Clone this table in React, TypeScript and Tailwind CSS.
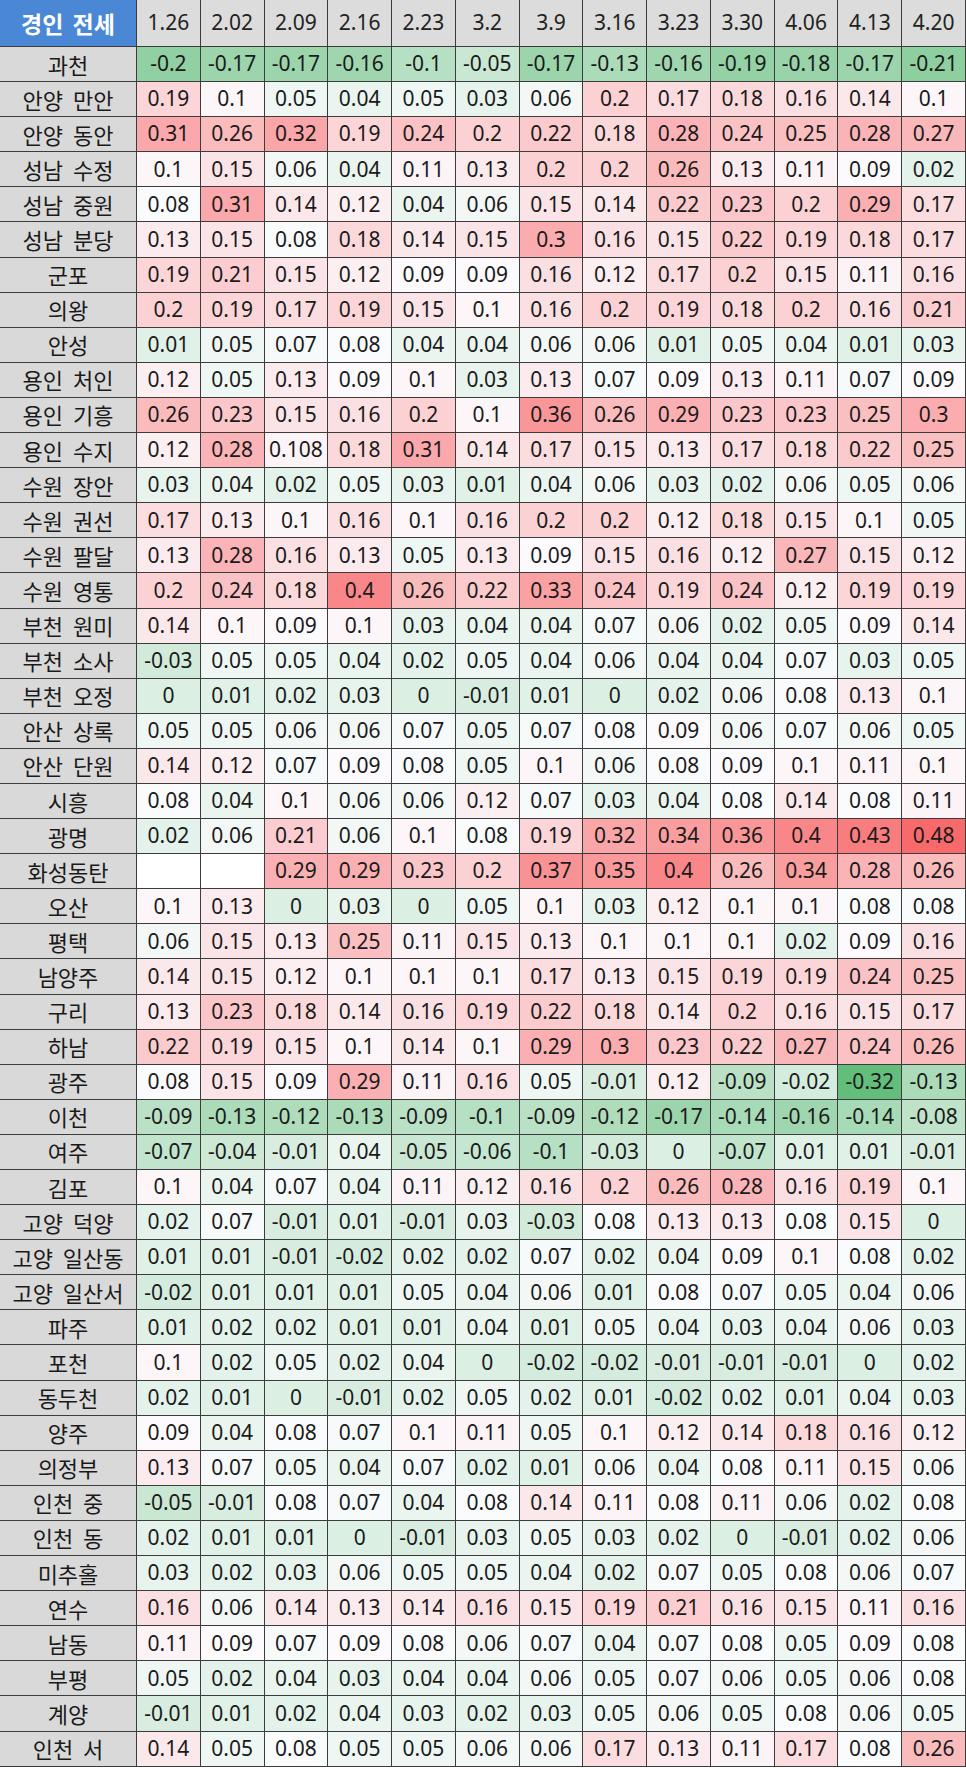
import React from 'react';

const cols = ['1.26', '2.02', '2.09', '2.16', '2.23', '3.2', '3.9', '3.16', '3.23', '3.30', '4.06', '4.13', '4.20'];

type Row = [string, (number | null)[]];

const rows: Row[] = [
  ['과천', [-0.2, -0.17, -0.17, -0.16, -0.1, -0.05, -0.17, -0.13, -0.16, -0.19, -0.18, -0.17, -0.21]],
  ['안양 만안', [0.19, 0.1, 0.05, 0.04, 0.05, 0.03, 0.06, 0.2, 0.17, 0.18, 0.16, 0.14, 0.1]],
  ['안양 동안', [0.31, 0.26, 0.32, 0.19, 0.24, 0.2, 0.22, 0.18, 0.28, 0.24, 0.25, 0.28, 0.27]],
  ['성남 수정', [0.1, 0.15, 0.06, 0.04, 0.11, 0.13, 0.2, 0.2, 0.26, 0.13, 0.11, 0.09, 0.02]],
  ['성남 중원', [0.08, 0.31, 0.14, 0.12, 0.04, 0.06, 0.15, 0.14, 0.22, 0.23, 0.2, 0.29, 0.17]],
  ['성남 분당', [0.13, 0.15, 0.08, 0.18, 0.14, 0.15, 0.3, 0.16, 0.15, 0.22, 0.19, 0.18, 0.17]],
  ['군포', [0.19, 0.21, 0.15, 0.12, 0.09, 0.09, 0.16, 0.12, 0.17, 0.2, 0.15, 0.11, 0.16]],
  ['의왕', [0.2, 0.19, 0.17, 0.19, 0.15, 0.1, 0.16, 0.2, 0.19, 0.18, 0.2, 0.16, 0.21]],
  ['안성', [0.01, 0.05, 0.07, 0.08, 0.04, 0.04, 0.06, 0.06, 0.01, 0.05, 0.04, 0.01, 0.03]],
  ['용인 처인', [0.12, 0.05, 0.13, 0.09, 0.1, 0.03, 0.13, 0.07, 0.09, 0.13, 0.11, 0.07, 0.09]],
  ['용인 기흥', [0.26, 0.23, 0.15, 0.16, 0.2, 0.1, 0.36, 0.26, 0.29, 0.23, 0.23, 0.25, 0.3]],
  ['용인 수지', [0.12, 0.28, 0.108, 0.18, 0.31, 0.14, 0.17, 0.15, 0.13, 0.17, 0.18, 0.22, 0.25]],
  ['수원 장안', [0.03, 0.04, 0.02, 0.05, 0.03, 0.01, 0.04, 0.06, 0.03, 0.02, 0.06, 0.05, 0.06]],
  ['수원 권선', [0.17, 0.13, 0.1, 0.16, 0.1, 0.16, 0.2, 0.2, 0.12, 0.18, 0.15, 0.1, 0.05]],
  ['수원 팔달', [0.13, 0.28, 0.16, 0.13, 0.05, 0.13, 0.09, 0.15, 0.16, 0.12, 0.27, 0.15, 0.12]],
  ['수원 영통', [0.2, 0.24, 0.18, 0.4, 0.26, 0.22, 0.33, 0.24, 0.19, 0.24, 0.12, 0.19, 0.19]],
  ['부천 원미', [0.14, 0.1, 0.09, 0.1, 0.03, 0.04, 0.04, 0.07, 0.06, 0.02, 0.05, 0.09, 0.14]],
  ['부천 소사', [-0.03, 0.05, 0.05, 0.04, 0.02, 0.05, 0.04, 0.06, 0.04, 0.04, 0.07, 0.03, 0.05]],
  ['부천 오정', [0, 0.01, 0.02, 0.03, 0, -0.01, 0.01, 0, 0.02, 0.06, 0.08, 0.13, 0.1]],
  ['안산 상록', [0.05, 0.05, 0.06, 0.06, 0.07, 0.05, 0.07, 0.08, 0.09, 0.06, 0.07, 0.06, 0.05]],
  ['안산 단원', [0.14, 0.12, 0.07, 0.09, 0.08, 0.05, 0.1, 0.06, 0.08, 0.09, 0.1, 0.11, 0.1]],
  ['시흥', [0.08, 0.04, 0.1, 0.06, 0.06, 0.12, 0.07, 0.03, 0.04, 0.08, 0.14, 0.08, 0.11]],
  ['광명', [0.02, 0.06, 0.21, 0.06, 0.1, 0.08, 0.19, 0.32, 0.34, 0.36, 0.4, 0.43, 0.48]],
  ['화성동탄', [null, null, 0.29, 0.29, 0.23, 0.2, 0.37, 0.35, 0.4, 0.26, 0.34, 0.28, 0.26]],
  ['오산', [0.1, 0.13, 0, 0.03, 0, 0.05, 0.1, 0.03, 0.12, 0.1, 0.1, 0.08, 0.08]],
  ['평택', [0.06, 0.15, 0.13, 0.25, 0.11, 0.15, 0.13, 0.1, 0.1, 0.1, 0.02, 0.09, 0.16]],
  ['남양주', [0.14, 0.15, 0.12, 0.1, 0.1, 0.1, 0.17, 0.13, 0.15, 0.19, 0.19, 0.24, 0.25]],
  ['구리', [0.13, 0.23, 0.18, 0.14, 0.16, 0.19, 0.22, 0.18, 0.14, 0.2, 0.16, 0.15, 0.17]],
  ['하남', [0.22, 0.19, 0.15, 0.1, 0.14, 0.1, 0.29, 0.3, 0.23, 0.22, 0.27, 0.24, 0.26]],
  ['광주', [0.08, 0.15, 0.09, 0.29, 0.11, 0.16, 0.05, -0.01, 0.12, -0.09, -0.02, -0.32, -0.13]],
  ['이천', [-0.09, -0.13, -0.12, -0.13, -0.09, -0.1, -0.09, -0.12, -0.17, -0.14, -0.16, -0.14, -0.08]],
  ['여주', [-0.07, -0.04, -0.01, 0.04, -0.05, -0.06, -0.1, -0.03, 0, -0.07, 0.01, 0.01, -0.01]],
  ['김포', [0.1, 0.04, 0.07, 0.04, 0.11, 0.12, 0.16, 0.2, 0.26, 0.28, 0.16, 0.19, 0.1]],
  ['고양 덕양', [0.02, 0.07, -0.01, 0.01, -0.01, 0.03, -0.03, 0.08, 0.13, 0.13, 0.08, 0.15, 0]],
  ['고양 일산동', [0.01, 0.01, -0.01, -0.02, 0.02, 0.02, 0.07, 0.02, 0.04, 0.09, 0.1, 0.08, 0.02]],
  ['고양 일산서', [-0.02, 0.01, 0.01, 0.01, 0.05, 0.04, 0.06, 0.01, 0.08, 0.07, 0.05, 0.04, 0.06]],
  ['파주', [0.01, 0.02, 0.02, 0.01, 0.01, 0.04, 0.01, 0.05, 0.04, 0.03, 0.04, 0.06, 0.03]],
  ['포천', [0.1, 0.02, 0.05, 0.02, 0.04, 0, -0.02, -0.02, -0.01, -0.01, -0.01, 0, 0.02]],
  ['동두천', [0.02, 0.01, 0, -0.01, 0.02, 0.05, 0.02, 0.01, -0.02, 0.02, 0.01, 0.04, 0.03]],
  ['양주', [0.09, 0.04, 0.08, 0.07, 0.1, 0.11, 0.05, 0.1, 0.12, 0.14, 0.18, 0.16, 0.12]],
  ['의정부', [0.13, 0.07, 0.05, 0.04, 0.07, 0.02, 0.01, 0.06, 0.04, 0.08, 0.11, 0.15, 0.06]],
  ['인천 중', [-0.05, -0.01, 0.08, 0.07, 0.04, 0.08, 0.14, 0.11, 0.08, 0.11, 0.06, 0.02, 0.08]],
  ['인천 동', [0.02, 0.01, 0.01, 0, -0.01, 0.03, 0.05, 0.03, 0.02, 0, -0.01, 0.02, 0.06]],
  ['미추홀', [0.03, 0.02, 0.03, 0.06, 0.05, 0.05, 0.04, 0.02, 0.07, 0.05, 0.08, 0.06, 0.07]],
  ['연수', [0.16, 0.06, 0.14, 0.13, 0.14, 0.16, 0.15, 0.19, 0.21, 0.16, 0.15, 0.11, 0.16]],
  ['남동', [0.11, 0.09, 0.07, 0.09, 0.08, 0.06, 0.07, 0.04, 0.07, 0.08, 0.05, 0.09, 0.08]],
  ['부평', [0.05, 0.02, 0.04, 0.03, 0.04, 0.04, 0.06, 0.05, 0.07, 0.06, 0.05, 0.06, 0.08]],
  ['계양', [-0.01, 0.01, 0.02, 0.04, 0.03, 0.02, 0.03, 0.05, 0.06, 0.05, 0.08, 0.06, 0.05]],
  ['인천 서', [0.14, 0.05, 0.08, 0.05, 0.05, 0.06, 0.06, 0.17, 0.13, 0.11, 0.17, 0.08, 0.26]],
];

// excel-ish 3 colour scale: green at min, white at mid, red at max
const MIN = -0.32;
const MID = 0.085;
const MAX = 0.48;
const WHITE = [252, 252, 255];
const GREEN = [99, 190, 123];
const RED = [248, 105, 107];

function cellColor(v: number | null) {
  if (v === null) return '#ffffff';
  let t: number;
  let to: number[];
  if (v <= MID) {
    t = (MID - v) / (MID - MIN);
    to = GREEN;
  } else {
    t = (v - MID) / (MAX - MID);
    to = RED;
  }
  t = Math.max(0, Math.min(1, t));
  const c = WHITE.map((w, i) => Math.round(w + (to[i] - w) * t));
  return `rgb(${c[0]},${c[1]},${c[2]})`;
}

export default function App() {
  return (
    <div className="w-[966px] bg-white font-['Noto_Sans','Noto_Sans_CJK_KR',sans-serif]">
      <div className="grid grid-cols-[137px_repeat(13,minmax(0,1fr))] grid-rows-[47px_repeat(49,35.1px)] text-[#1a1a1a]">
        <div className="flex items-center justify-center border-r border-b border-[#3c3c3c] bg-[#4a88d6] font-['Noto_Sans_CJK_KR',sans-serif] text-[23px] font-bold text-white [word-spacing:4px]">
          경인 전세
        </div>
        {cols.map((c) => (
          <div
            key={c}
            className="flex items-center justify-center border-r border-b border-[#3c3c3c] bg-[#dcdcdc] text-[21px] text-[#222]"
          >
            {c}
          </div>
        ))}
        {rows.map(([name, vals]) => (
          <React.Fragment key={name}>
            <div className="flex items-center justify-center whitespace-nowrap border-r border-b border-[#3c3c3c] bg-[#d9d9d9] font-['Noto_Sans_CJK_KR',sans-serif] text-[22px] [word-spacing:5px]">
              {name}
            </div>
            {vals.map((v, i) => (
              <div
                key={i}
                className="flex items-center justify-center border-r border-b border-[#3c3c3c] text-[21px]"
                style={{ backgroundColor: cellColor(v) }}
              >
                {v === null ? '' : String(v)}
              </div>
            ))}
          </React.Fragment>
        ))}
      </div>
    </div>
  );
}
